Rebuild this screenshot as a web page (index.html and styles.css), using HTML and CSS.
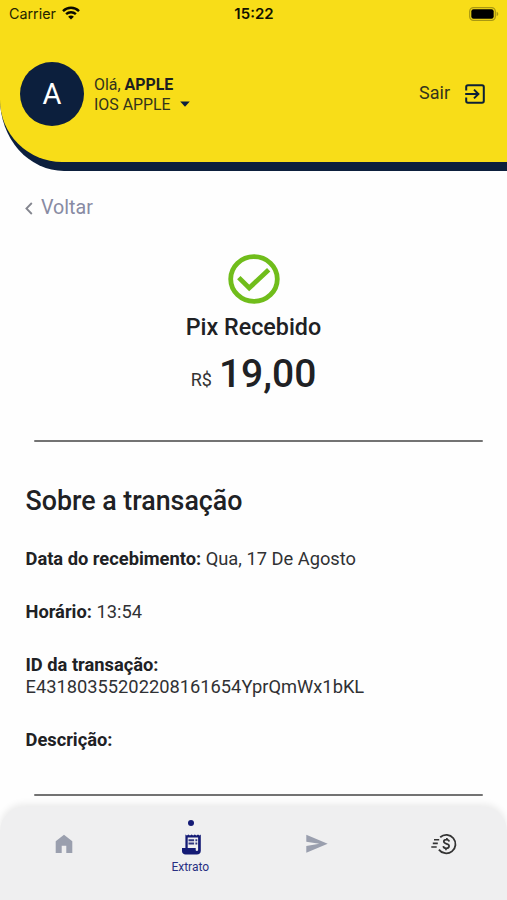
FILE: index.html
```html
<!DOCTYPE html>
<html lang="pt-BR">
<head>
<meta charset="utf-8">
<meta name="viewport" content="width=device-width, initial-scale=1">
<title>Extrato</title>
<link rel="stylesheet" href="styles.css">
</head>
<body>
<div class="app">
  <header class="header">
    <div class="header-panel">
      <div class="status">
        <div class="status-carrier"><span class="carrier">Carrier</span>
          <svg class="wifi" viewBox="0 0 18 14"><g fill="none" stroke="#0b0b00" stroke-width="2.4"><path d="M1 5.1C5.5.6 12.5.6 17 5.1"/><path d="M4.1 8.2c2.8-2.7 7-2.7 9.8 0"/></g><path d="M9 13.6 6.1 10.7c1.6-1.5 4.2-1.5 5.8 0z" fill="#0b0b00"/></svg>
        </div>
        <span class="time">15:22</span>
        <svg class="battery" viewBox="0 0 30 14"><rect x=".7" y=".7" width="25.6" height="12.6" rx="3.8" fill="none" stroke="#a99812" stroke-width="1.3"/><rect x="2.3" y="2.3" width="22.4" height="9.4" rx="2.2" fill="#000"/><path d="M27.6 4.8c2.2.7 2.2 3.7 0 4.4z" fill="#a99812"/></svg>
      </div>
      <div class="user">
        <div class="avatar">A</div>
        <div class="names">
          <div class="name-line hello">Olá, <b>APPLE</b></div>
          <div class="name-line account"><span>IOS APPLE</span><svg class="caret" viewBox="0 0 10 6"><path d="M.2.4h9.6L5 5.7z" fill="#0c1f3d"/></svg></div>
        </div>
        <a class="logout"><span>Sair</span>
          <svg class="exit" viewBox="0 0 20 20" fill="none" stroke="#0c2036" stroke-width="2"><path d="M1.2 6.5V3a1.8 1.8 0 0 1 1.8-1.8h14A1.8 1.8 0 0 1 18.8 3v14a1.8 1.8 0 0 1-1.8 1.8H3A1.8 1.8 0 0 1 1.2 17v-3.5M.2 10h12.6M9 5.6l4.4 4.4L9 14.4"/></svg>
        </a>
      </div>
    </div>
  </header>
  <main class="content">
    <a class="back"><svg class="chevron" viewBox="0 0 8 13"><path d="M6.8 1 1.4 6.5 6.8 12" fill="none" stroke="#84868f" stroke-width="1.8"/></svg><span>Voltar</span></a>
    <section class="summary">
      <svg class="check" viewBox="0 0 52 50"><ellipse cx="26" cy="25" rx="23.3" ry="22.3" fill="none" stroke="#70bd1b" stroke-width="4.8"/><path d="M10.8 23.6 21.2 34 40.7 15.8" fill="none" stroke="#70bd1b" stroke-width="4.8"/></svg>
      <h1 class="title">Pix Recebido</h1>
      <div class="amount"><span class="currency">R$</span><span class="value">19,00</span></div>
    </section>
    <hr class="rule">
    <section class="details">
      <h2 class="subtitle">Sobre a transação</h2>
      <p class="row"><b>Data do recebimento:</b> <span>Qua, 17 De Agosto</span></p>
      <p class="row"><b>Horário:</b> <span>13:54</span></p>
      <p class="row"><b>ID da transação:</b><br><span>E43180355202208161654YprQmWx1bKL</span></p>
      <p class="row"><b>Descrição:</b></p>
    </section>
    <hr class="rule">
  </main>
  <nav class="tabs">
    <a class="tab"><span class="dot"></span><svg class="icon" viewBox="0 0 28 24"><path d="M5.7 21V9.3L14 2.8l8.3 6.5V21h-6v-7.2h-4.6V21z" fill="#9a9fae"/></svg></a>
    <a class="tab active"><span class="dot"></span><svg class="icon" viewBox="0 0 28 24"><path d="M8.4 16V2.4l1.5 1.1 1.5-1.1 1.6 1.1 1.6-1.1 1.6 1.1 1.6-1.1 1.6 1.1 1.6-1.1 1.6 1.1 1.2-1.1v16.4a4 4 0 0 1-4 3.8H8.6a3.5 3.5 0 0 1-3.6-3.6V16z" fill="#141b75"/><path d="M10.7 5.4h10.4v12.9a1.3 1.3 0 0 1-2.4 0V16h-8z" fill="#efeff0"/><path d="M11.5 8.2h5.6M11.5 11.4h5.6M18.4 8.2h1.9M18.4 11.4h1.9" stroke="#31377f" stroke-width="2"/></svg><span class="label">Extrato</span></a>
    <a class="tab"><span class="dot"></span><svg class="icon" viewBox="0 0 28 24"><path d="m3.3 2.8 21.4 9-21.4 9v-6.9l13-2.1-13-2.1z" fill="#9a9fae"/></svg></a>
    <a class="tab"><span class="dot"></span><svg class="icon" viewBox="0 0 28 24" fill="none" stroke="#333" stroke-width="1.8"><path d="M10.2 5.2a9.2 9.2 0 1 1-1.3 12.4"/><path d="M4 7.8h5.2M2.8 11.4h5M1.3 15h5.4" stroke-width="1.6"/><path d="M19.2 9.5c-.2-1.2-1.2-1.9-2.8-1.9-1.5 0-2.6.8-2.6 2 0 3 5.5 1.6 5.3 4.5-.1 1.4-1.2 2.2-2.8 2.2-1.7 0-2.9-.8-3-2.2M16.9 6v2M15.9 16.1v2.2" stroke-width="1.7"/></svg></a>
  </nav>
</div>
</body>
</html>
```
FILE: styles.css
```css
* { box-sizing: border-box; }
body { margin: 0; background: #fff; color: #202124; font-family: Roboto, "Liberation Sans", sans-serif; }
svg { display: block; flex: none; }
.app { width: 507px; height: 900px; display: flex; flex-direction: column; overflow: hidden; background: #fefefe; }

.header { height: 171px; flex: none; background: #0c1f3d; border-bottom-left-radius: 64px 72px; }
.header-panel { height: 162px; background: #f8dd18; border-bottom-left-radius: 62px; overflow: hidden; }
.status { height: 28px; padding: 0 8px 0 9px; display: grid; grid-template-columns: 1fr auto 1fr; align-items: center; font-family: Inter, sans-serif; font-size: 14.3px; line-height: 28px; color: #242400; }
.status-carrier { display: flex; align-items: center; gap: 6px; }
.wifi { width: 18px; height: 14px; margin-top: -2px; }
.time { font-weight: 600; font-size: 15px; color: #111100; }
.battery { width: 30px; height: 14px; justify-self: end; margin-top: -1px; }
.user { display: flex; align-items: center; height: 64px; margin: 34px 22px 0 20px; }
.avatar { width: 64px; height: 64px; border-radius: 50%; background: #0c1f3d; color: #fff; font-size: 29px; line-height: 64px; text-align: center; }
.names { margin: 1px 0 0 10px; font-size: 15.9px; line-height: 20px; color: #33341c; }
.names b { color: #1c2020; }
.account { display: flex; align-items: center; gap: 9px; }
.caret { width: 10px; height: 6px; margin-top: -1px; }
.logout { margin-left: auto; display: flex; align-items: center; gap: 15px; font-size: 18px; line-height: 20px; color: #33341c; }
.logout span { margin-top: -2px; }
.exit { width: 20px; height: 20px; }

.content { flex: 1; min-height: 0; padding: 24px 25px 0; }
.back { display: flex; align-items: center; height: 24px; gap: 8px; font-size: 19.7px; line-height: 24px; color: #888ba3; }
.back span { margin-top: 2px; }
.chevron { width: 8px; height: 13px; margin-top: 2px; }
.summary { display: flex; flex-direction: column; align-items: center; margin-top: 35px; }
.check { width: 52px; height: 50px; }
.title { margin: 9px 0 0; font-size: 23.3px; line-height: 28px; font-weight: 500; }
.amount { display: flex; align-items: baseline; gap: 7px; margin: 9px 0 1px; height: 48px; line-height: 48px; }
.currency { font-size: 18px; color: #333; transform: translateY(-1px); }
.value { font-size: 39px; font-weight: 500; }
.rule { height: 2px; border: 0; border-radius: 1px; margin: 41px 0 0 9px; width: 449px; background: #737373; }
.details { padding-left: .5px; }
.subtitle { margin: 43px 0 0; font-size: 26.8px; line-height: 32px; font-weight: 500; }
.row { margin: 31px 0 0; font-size: 18.3px; line-height: 22px; color: #303134; }
.row b { color: #202124; }
.details + .rule { margin-top: 43px; }

.tabs { flex: none; height: 93px; padding-left: 1px; display: grid; grid-template-columns: repeat(4, 1fr); background: #efeff0; border-radius: 24px 24px 0 0; box-shadow: 0 -3px 7px rgba(0,0,0,.08); }
.tab { display: flex; flex-direction: column; align-items: center; padding-top: 13px; }
.dot { width: 6px; height: 6px; border-radius: 50%; }
.active .dot { background: #141b75; }
.icon { width: 28px; height: 24px; margin-top: 6px; }
.label { margin: 3px 1px 0 0; font-size: 12px; line-height: 16px; color: #292f82; }
```
